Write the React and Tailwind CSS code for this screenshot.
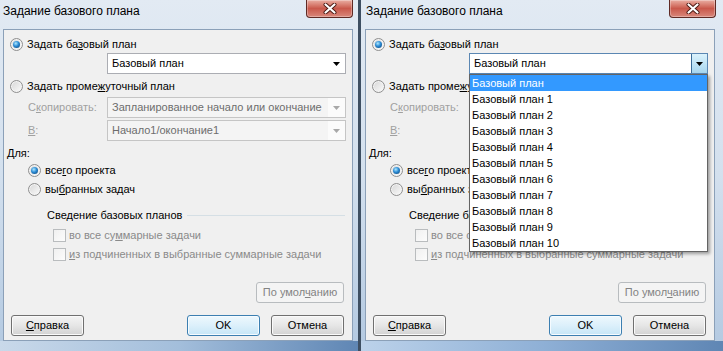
import React from "react";

const items = [
  "Базовый план",
  "Базовый план 1",
  "Базовый план 2",
  "Базовый план 3",
  "Базовый план 4",
  "Базовый план 5",
  "Базовый план 6",
  "Базовый план 7",
  "Базовый план 8",
  "Базовый план 9",
  "Базовый план 10",
];

const Arrow = ({ color = "#000" }) => (
  <svg width="7" height="4" viewBox="0 0 7 4" className="shrink-0">
    <path d="M0 0h7L3.5 4z" fill={color} />
  </svg>
);

const Radio = ({ checked }) => (
  <span className="flex h-[13px] w-[13px] shrink-0 items-center justify-center rounded-full border border-[#8f8f8f] bg-gradient-to-br from-[#d6d6d6] to-[#fbfbfb] shadow-[inset_0_0_0_1px_#f4f4f4]">
    {checked && (
      <span className="h-[7px] w-[7px] rounded-full bg-[radial-gradient(circle_at_40%_35%,#aee8ff,#2a8ad4_45%,#0b3c6a)]" />
    )}
  </span>
);

const Check = () => (
  <span className="h-[13px] w-[13px] shrink-0 border border-[#b9bcbe] bg-gradient-to-br from-[#f0f0f0] to-[#fcfcfc]" />
);

const Btn = ({ children, primary, disabled, className }) => (
  <div
    className={
      "flex h-[21px] items-center justify-center rounded-[3px] border " +
      (disabled
        ? "border-[#b8bcbf] bg-[#f4f4f4] text-[#838383] "
        : primary
          ? "border-[#3c7fb1] bg-gradient-to-b from-[#eef8fd] via-[#dcf0fb] to-[#c6e6f7] shadow-[inset_0_0_0_1px_#f5fbff] "
          : "border-[#707070] bg-gradient-to-b from-[#f4f4f4] via-[#e6e6e6] to-[#d2d2d2] shadow-[inset_0_0_0_1px_#fafafa] ") +
      className
    }
  >
    {children}
  </div>
);

const Close = ({ right }) => (
  <div
    className={
      "flex h-[18px] w-[47px] items-center justify-center rounded-b-[4px] border border-t-0 border-[#5f2a24] bg-gradient-to-b from-[#e9aea3] via-[#c9584b] to-[#d8877b] shadow-[inset_0_0_0_1px_rgba(255,255,255,0.3)] " +
      (right ? "mr-[7px]" : "mr-[5px]")
    }
  >
    <svg width="14" height="11" viewBox="0 0 14 11">
      <path d="M2.5 1.5l9 8M11.5 1.5l-9 8" stroke="#4a1812" strokeWidth="4" strokeLinecap="round" />
      <path d="M2.5 1.5l9 8M11.5 1.5l-9 8" stroke="#fff" strokeWidth="2.2" strokeLinecap="round" />
    </svg>
  </div>
);

function Dialog({ open }) {
  return (
    <div
      className={
        "flex h-[351px] shrink-0 flex-col bg-gradient-to-b from-[#e2eaf3] via-[#d3e0ee] to-[#b3c9e1] " +
        (open ? "w-[362px]" : "w-[358px]")
      }
    >
      <div className="flex h-[29px] items-start justify-between">
        <span
          className={
            "pt-[5px] text-[12px] text-black " + (open ? "pl-[5px]" : "pl-[3px]")
          }
        >
          Задание базового плана
        </span>
        <Close right={open} />
      </div>

      <div
        className={
          "flex h-[312px] flex-col border border-[#8ba0b8] bg-[#f0f0f0] text-[11px] text-black " +
          (open ? "ml-[4px] mr-[8px]" : "ml-[3px] mr-[5px]")
        }
      >
        <div className="mt-[6px] flex h-[16px] items-center gap-[4px] pl-[6px]">
          <Radio checked />
          <span>
            Задать ба<u className="underline-offset-1">з</u>овый план
          </span>
        </div>

        <div className="relative ml-[103px] mt-[1px] w-[239px]">
          <div
            className={
              "flex h-[21px] items-center justify-between border bg-white pl-[4px] " +
              (open ? "border-[#5b87b3]" : "border-[#abadb3] pr-[5px]")
            }
          >
            <span>Базовый план</span>
            {open ? (
              <span className="flex h-[19px] w-[16px] items-center justify-center border-l border-[#3c6d99] bg-gradient-to-b from-[#dbf2fc] to-[#a6d6ef]">
                <Arrow />
              </span>
            ) : (
              <Arrow />
            )}
          </div>
          {open && (
            <div className="absolute left-0 top-full z-10 flex w-[239px] flex-col border border-[#646464] bg-white shadow-[2px_2px_3px_rgba(0,0,0,0.35)]">
              {items.map((t, i) => (
                <div
                  key={t}
                  className={
                    "flex h-[16px] items-center pl-[2px] " +
                    (i === 0 ? "bg-[#3399ff] text-white" : "text-black")
                  }
                >
                  {t}
                </div>
              ))}
            </div>
          )}
        </div>

        <div className="mt-[4px] flex h-[16px] items-center gap-[4px] pl-[6px]">
          <Radio />
          <span>
            Задать проме<u className="underline-offset-1">ж</u>уточный план
          </span>
        </div>

        <div className="mt-[3px] flex h-[21px] items-center">
          <span className="w-[103px] pl-[24px] text-[#a0a0a0]">
            С<u className="underline-offset-1">к</u>опировать:
          </span>
          <div className="flex h-[21px] w-[239px] items-center justify-between border border-[#c5c5c5] bg-[#f4f4f4] pl-[4px] text-[#6d6d6d]">
            <span>Запланированное начало или окончание</span>
            <span className="flex h-[19px] w-[17px] items-center justify-center bg-[#fbfbfb]">
              <Arrow color="#a8a8a8" />
            </span>
          </div>
        </div>

        <div className="mt-[2px] flex h-[21px] items-center">
          <span className="w-[103px] pl-[24px] text-[#a0a0a0]">
            <u className="underline-offset-1">В</u>:
          </span>
          <div className="flex h-[21px] w-[239px] items-center justify-between border border-[#c5c5c5] bg-[#f4f4f4] pl-[4px] text-[#6d6d6d]">
            <span>Начало1/окончание1</span>
            <span className="flex h-[19px] w-[17px] items-center justify-center bg-[#fbfbfb]">
              <Arrow color="#a8a8a8" />
            </span>
          </div>
        </div>

        <div className="mt-[4px] flex h-[16px] items-center pl-[3px]">Для:</div>

        <div className="mt-[1px] flex h-[16px] items-center gap-[4px] pl-[24px]">
          <Radio checked />
          <span>
            все<u className="underline-offset-1">г</u>о проекта
          </span>
        </div>

        <div className="mt-[3px] flex h-[16px] items-center gap-[4px] pl-[24px]">
          <Radio />
          <span>
            вы<u className="underline-offset-1">б</u>ранных задач
          </span>
        </div>

        <div className="mt-[10px] flex h-[16px] items-center gap-[5px] pl-[43px] pr-[7px]">
          <span>Сведение базовых планов</span>
          <span className="h-px flex-1 bg-[#d5dfe5]" />
        </div>

        <div className="mt-[4px] flex h-[16px] items-center gap-[3px] pl-[49px] text-[#8a8a8a]">
          <Check />
          <span>
            во все су<u className="underline-offset-1">м</u>марные задачи
          </span>
        </div>

        <div className="mt-[3px] flex h-[16px] items-center gap-[3px] pl-[49px] text-[#8a8a8a]">
          <Check />
          <span>
            <u className="underline-offset-1">и</u>з подчиненных в выбранные суммарные задачи
          </span>
        </div>

        <div className="mt-[20px] flex justify-end pr-[8px]">
          <Btn disabled className="w-[88px]">
            <span>
              По умол<u className="underline-offset-1">ч</u>анию
            </span>
          </Btn>
        </div>

        <div className="mt-[12px] flex items-center pl-[7px] pr-[8px]">
          <Btn className="w-[73px]">
            <span>
              <u className="underline-offset-1">С</u>правка
            </span>
          </Btn>
          <div className="flex-1" />
          <Btn primary className="w-[73px]">
            OK
          </Btn>
          <Btn className="ml-[11px] w-[73px]">Отмена</Btn>
        </div>
      </div>

      <div
        className={
          "flex-1 " +
          (open
            ? "bg-gradient-to-r from-[#bcd2ea] via-[#8fb0d6] to-[#5f86b4]"
            : "bg-gradient-to-r from-[#c9d9ea] via-[#a3bedb] to-[#5f86b4]")
        }
      />
    </div>
  );
}

export default function App() {
  return (
    <div className="flex h-[351px] w-[723px] gap-[3px] bg-[#3e4f62] font-['Liberation_Sans',Arial,sans-serif] leading-none">
      <Dialog />
      <Dialog open />
    </div>
  );
}
